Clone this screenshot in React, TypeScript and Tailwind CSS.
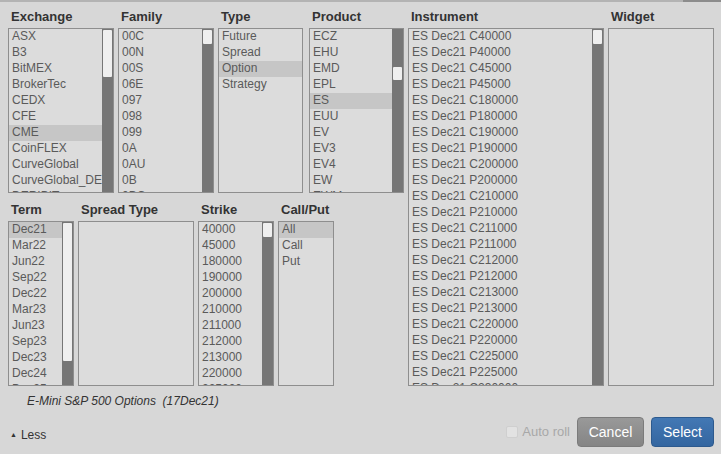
import React from 'react';

type ListProps = {
  title: string;
  width: string;
  height: string;
  items: string[];
  selected?: string;
  thumb?: { top: string; height: string };
};

const exchanges = ['ASX', 'B3', 'BitMEX', 'BrokerTec', 'CEDX', 'CFE', 'CME', 'CoinFLEX', 'CurveGlobal', 'CurveGlobal_DERIV', 'DERIBIT'];
const families = ['00C', '00N', '00S', '06E', '097', '098', '099', '0A', '0AU', '0B', '0BC'];
const types = ['Future', 'Spread', 'Option', 'Strategy'];
const products = ['ECZ', 'EHU', 'EMD', 'EPL', 'ES', 'EUU', 'EV', 'EV3', 'EV4', 'EW', 'EWM'];
const terms = ['Dec21', 'Mar22', 'Jun22', 'Sep22', 'Dec22', 'Mar23', 'Jun23', 'Sep23', 'Dec23', 'Dec24', 'Dec25'];
const strikes = ['40000', '45000', '180000', '190000', '200000', '210000', '211000', '212000', '213000', '220000', '225000'];
const callPut = ['All', 'Call', 'Put'];

const instrumentStrikes = ['40000', '45000', '180000', '190000', '200000', '210000', '211000', '212000', '213000', '220000', '225000', '230000'];
const instruments: string[] = [];
instrumentStrikes.forEach((s) => {
  instruments.push(`ES Dec21 C${s}`);
  instruments.push(`ES Dec21 P${s}`);
});

const ListColumn = ({ title, width, height, items, selected, thumb }: ListProps) => (
  <div className={`${width} flex flex-col shrink-0`}>
    <div className="h-[19px] pl-[3px] text-[13px] font-bold leading-[16px] text-[#333]">{title}</div>
    <div className={`${height} flex border border-[#8e8e8e] bg-[#dcdcdc] overflow-hidden`}>
      <div className="flex-1 min-w-0 overflow-hidden">
        {items.map((item) => (
          <div
            key={item}
            className={`h-[16px] pl-[3px] text-[12px] leading-[14px] text-[#5a5a5a] whitespace-nowrap overflow-hidden ${
              item === selected ? 'bg-[#c6c6c6]' : ''
            }`}
          >
            {item}
          </div>
        ))}
      </div>
      {thumb && (
        <div className="w-[11px] shrink-0 bg-[#767676] flex flex-col">
          <div className={`${thumb.top} ${thumb.height} mx-[1px] bg-[#efefef] rounded-[1px]`} />
        </div>
      )}
    </div>
  </div>
);

export default function App() {
  return (
    <div className="w-[721px] h-[454px] bg-[#d7d7d7] flex flex-col font-['Liberation_Sans',Arial,sans-serif] overflow-hidden">
      <div className="h-[2px] flex shrink-0">
        <div className="flex-1 bg-[#b3b3b3]" />
        <div className="w-[38px] bg-[#8c8c8c]" />
      </div>

      <div className="flex pl-[8px] pt-[7px] gap-[4px]">
        <div className="w-[396px] flex flex-col gap-[9px]">
          <div className="flex">
            <ListColumn title="Exchange" width="w-[106px]" height="h-[165px]" items={exchanges} selected="CME" thumb={{ top: 'mt-[1px]', height: 'h-[47px]' }} />
            <div className="w-[4px]" />
            <ListColumn title="Family" width="w-[96px]" height="h-[165px]" items={families} thumb={{ top: 'mt-[1px]', height: 'h-[14px]' }} />
            <div className="w-[4px]" />
            <ListColumn title="Type" width="w-[85px]" height="h-[165px]" items={types} selected="Option" />
            <div className="w-[6px]" />
            <ListColumn title="Product" width="w-[95px]" height="h-[165px]" items={products} selected="ES" thumb={{ top: 'mt-[38px]', height: 'h-[13px]' }} />
          </div>
          <div className="flex gap-[4px]">
            <ListColumn title="Term" width="w-[66px]" height="h-[165px]" items={terms} selected="Dec21" thumb={{ top: 'mt-[1px]', height: 'h-[138px]' }} />
            <ListColumn title="Spread Type" width="w-[116px]" height="h-[165px]" items={[]} />
            <ListColumn title="Strike" width="w-[76px]" height="h-[165px]" items={strikes} thumb={{ top: 'mt-[1px]', height: 'h-[14px]' }} />
            <ListColumn title="Call/Put" width="w-[56px]" height="h-[165px]" items={callPut} selected="All" />
          </div>
        </div>
        <ListColumn title="Instrument" width="w-[196px]" height="h-[358px]" items={instruments} thumb={{ top: 'mt-[1px]', height: 'h-[14px]' }} />
        <ListColumn title="Widget" width="w-[106px]" height="h-[358px]" items={[]} />
      </div>

      <div className="mt-[7px] pl-[27px] h-[16px] text-[12px] leading-[16px] italic text-[#333]">
        E-Mini S&amp;P 500 Options&nbsp;&nbsp;(17Dec21)
      </div>

      <div className="mt-[8px] flex items-center pl-[10px] pr-[7px] h-[30px]">
        <div className="mt-[6px] flex items-center gap-[4px] text-[12px] text-[#333]">
          <span className="text-[7px]">▲</span>
          <span>Less</span>
        </div>
        <div className="flex-1" />
        <div className="flex items-center gap-[4px] mr-[7px]">
          <div className="w-[12px] h-[12px] rounded-[2px] border border-[#cfcfcf] bg-[#e2e2e2]" />
          <span className="text-[13px] text-[#a8a8a8]">Auto roll</span>
        </div>
        <button className="w-[67px] h-[30px] rounded-[4px] border border-[#7b7b7b] bg-gradient-to-b from-[#999] to-[#858585] text-[14px] text-white">
          Cancel
        </button>
        <button className="ml-[7px] w-[63px] h-[30px] rounded-[4px] border border-[#2d5a8e] bg-gradient-to-b from-[#4378b4] to-[#3466a0] text-[14px] text-white">
          Select
        </button>
      </div>
    </div>
  );
}
